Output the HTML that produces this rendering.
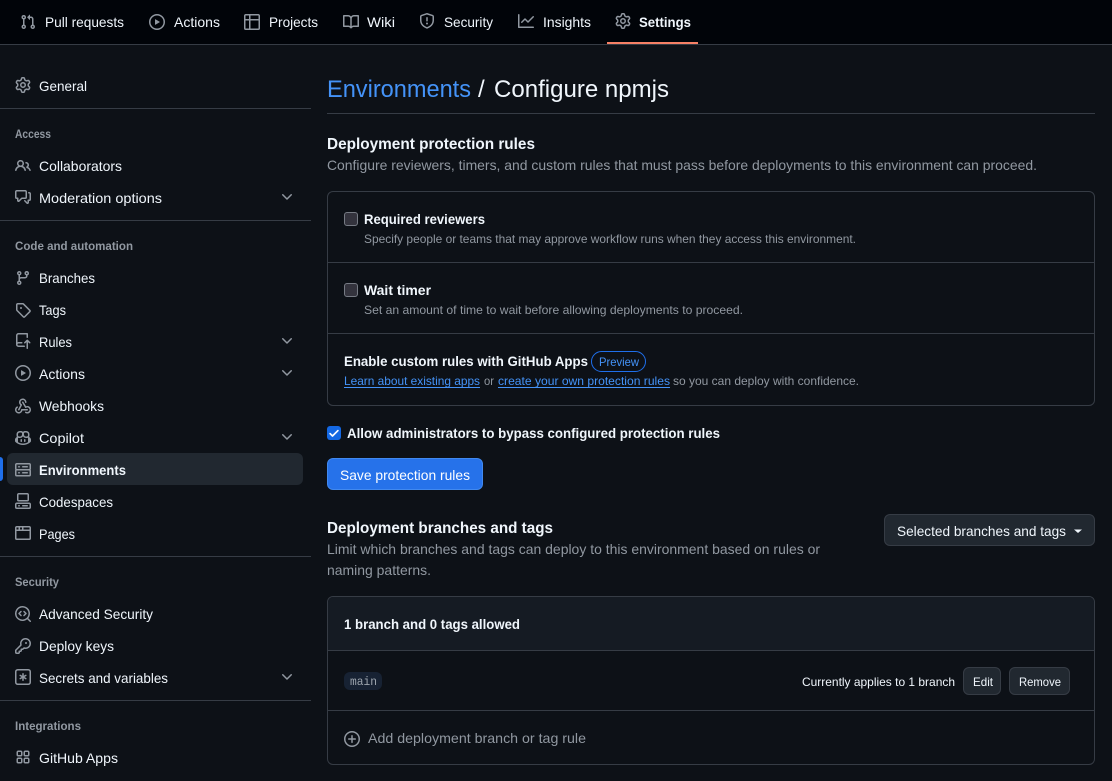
<!DOCTYPE html>
<html lang="en"><head><meta charset="utf-8"><title>Configure npmjs</title>
<style>
html,body{margin:0;padding:0;background:#0d1117;width:1112px;height:781px;overflow:hidden}
.b{position:absolute;box-sizing:border-box}
svg{position:absolute;left:0;top:0}
text{font-family:"Liberation Sans",sans-serif;font-size:14px;fill:#f0f6fc}
text.s{font-weight:700}
text.m{fill:#9198a1}
text.x{font-size:12px}
text.l{fill:#4493f8}
text.h{font-size:12px;fill:#9198a1;font-weight:700}
path,.i{fill:#9198a1}
</style></head><body>
<div class="b" style="left:0;top:0;width:1112px;height:45px;background:#010409;border-bottom:1px solid #363c45"></div>
<div class="b" style="left:607px;top:42px;width:91px;height:2px;background:#f78166"></div>
<div class="b" style="left:0;top:108px;width:311px;height:1px;background:#363c45"></div>
<div class="b" style="left:0;top:220px;width:311px;height:1px;background:#363c45"></div>
<div class="b" style="left:0;top:556px;width:311px;height:1px;background:#363c45"></div>
<div class="b" style="left:0;top:700px;width:311px;height:1px;background:#363c45"></div>
<div class="b" style="left:7px;top:453px;width:296px;height:32px;background:#212830;border-radius:6px"></div>
<div class="b" style="left:0;top:457px;width:3px;height:24px;background:#1f6feb;border-radius:0 3px 3px 0"></div>
<div class="b" style="left:327px;top:113px;width:768px;height:1px;background:#363c45"></div>
<div class="b" style="left:327px;top:191px;width:768px;height:215px;border:1px solid #363c45;border-radius:6px"></div>
<div class="b" style="left:328px;top:262px;width:766px;height:1px;background:#363c45"></div>
<div class="b" style="left:328px;top:333px;width:766px;height:1px;background:#363c45"></div>
<div class="b" style="left:344px;top:212px;width:14px;height:14px;background:#33333d;border:1px solid #767b84;border-radius:3px"></div>
<div class="b" style="left:344px;top:283px;width:14px;height:14px;background:#33333d;border:1px solid #767b84;border-radius:3px"></div>
<div class="b" style="left:591px;top:351px;width:55px;height:21px;border:1px solid #1f6feb;border-radius:11px"></div>
<div class="b" style="left:344px;top:387px;width:136px;height:1px;background:#4493f8"></div>
<div class="b" style="left:498px;top:387px;width:172px;height:1px;background:#4493f8"></div>
<div class="b" style="left:327px;top:426px;width:14px;height:14px;background:#1468e3;border-radius:3px"></div>
<div class="b" style="left:327px;top:458px;width:156px;height:32px;background:#2672ea;border:1px solid #4189f0;border-radius:6px"></div>
<div class="b" style="left:884px;top:514px;width:211px;height:32px;background:#212830;border:1px solid #363c45;border-radius:6px"></div>
<div class="b" style="left:327px;top:596px;width:768px;height:169px;border:1px solid #363c45;border-radius:6px"></div>
<div class="b" style="left:328px;top:597px;width:766px;height:54px;background:#151b23;border-bottom:1px solid #363c45;border-radius:5px 5px 0 0"></div>
<div class="b" style="left:328px;top:710px;width:766px;height:1px;background:#363c45"></div>
<div class="b" style="left:344px;top:672px;width:38px;height:18px;background:#172233;border-radius:6px"></div>
<div class="b" style="left:963px;top:667px;width:38px;height:28px;background:#212830;border:1px solid #363c45;border-radius:6px"></div>
<div class="b" style="left:1009px;top:667px;width:61px;height:28px;background:#212830;border:1px solid #363c45;border-radius:6px"></div>

<svg width="1112" height="781" viewBox="0 0 1112 781" xmlns="http://www.w3.org/2000/svg">
<defs>
<symbol id="play" viewBox="0 0 16 16"><path d="M8 0a8 8 0 1 1 0 16A8 8 0 0 1 8 0ZM1.5 8a6.5 6.5 0 1 0 13 0 6.5 6.5 0 0 0-13 0Zm4.879-2.773 4.264 2.559a.25.25 0 0 1 0 .428l-4.264 2.559A.25.25 0 0 1 6 10.559V5.442a.25.25 0 0 1 .379-.215Z"/></symbol>
<symbol id="gear" viewBox="0 0 16 16"><path d="M8 0a8.2 8.2 0 0 1 .701.031C9.444.095 9.99.645 10.16 1.29l.288 1.107c.018.066.079.158.212.224.231.114.454.243.668.386.123.082.233.09.299.071l1.103-.303c.644-.176 1.392.021 1.82.63.27.385.506.792.704 1.218.315.675.111 1.422-.364 1.891l-.814.806c-.049.048-.098.147-.088.294.016.257.016.515 0 .772-.01.147.038.246.088.294l.814.806c.475.469.679 1.216.364 1.891a7.977 7.977 0 0 1-.704 1.217c-.428.61-1.176.807-1.82.63l-1.102-.302c-.067-.019-.177-.011-.3.071a5.909 5.909 0 0 1-.668.386c-.133.066-.194.158-.211.224l-.29 1.106c-.168.646-.715 1.196-1.458 1.26a8.006 8.006 0 0 1-1.402 0c-.743-.064-1.289-.614-1.458-1.26l-.289-1.106c-.018-.066-.079-.158-.212-.224a5.738 5.738 0 0 1-.668-.386c-.123-.082-.233-.09-.299-.071l-1.103.303c-.644.176-1.392-.021-1.82-.63a8.12 8.12 0 0 1-.704-1.218c-.315-.675-.111-1.422.363-1.891l.815-.806c.05-.048.098-.147.088-.294a6.214 6.214 0 0 1 0-.772c.01-.147-.038-.246-.088-.294l-.815-.806C.635 6.045.431 5.298.746 4.623a7.92 7.92 0 0 1 .704-1.217c.428-.61 1.176-.807 1.82-.63l1.102.302c.067.019.177.011.3-.071.214-.143.437-.272.668-.386.133-.066.194-.158.211-.224l.29-1.106C6.009.645 6.556.095 7.299.03 7.53.01 7.764 0 8 0Zm-.571 1.525c-.036.003-.108.036-.137.146l-.289 1.105c-.147.561-.549.967-.998 1.189-.173.086-.34.183-.5.29-.417.278-.97.423-1.529.27l-1.103-.303c-.109-.03-.175.016-.195.045-.22.312-.412.644-.573.99-.014.031-.021.11.059.19l.815.806c.411.406.562.957.53 1.456a4.709 4.709 0 0 0 0 .582c.032.499-.119 1.05-.53 1.456l-.815.806c-.081.08-.073.159-.059.19.162.346.353.677.573.989.02.03.085.076.195.046l1.102-.303c.56-.153 1.113-.008 1.53.27.161.107.328.204.501.29.447.222.85.629.997 1.189l.289 1.105c.029.109.101.143.137.146a6.6 6.6 0 0 0 1.142 0c.036-.003.108-.036.137-.146l.289-1.105c.147-.561.549-.967.998-1.189.173-.086.34-.183.5-.29.417-.278.97-.423 1.529-.27l1.103.303c.109.029.175-.016.195-.045.22-.313.411-.644.573-.99.014-.031.021-.11-.059-.19l-.815-.806c-.411-.406-.562-.957-.53-1.456a4.709 4.709 0 0 0 0-.582c-.032-.499.119-1.05.53-1.456l.815-.806c.081-.08.073-.159.059-.19a6.464 6.464 0 0 0-.573-.989c-.02-.03-.085-.076-.195-.046l-1.102.303c-.56.153-1.113.008-1.53-.27a4.44 4.44 0 0 0-.501-.29c-.447-.222-.85-.629-.997-1.189l-.289-1.105c-.029-.11-.101-.143-.137-.146a6.6 6.6 0 0 0-1.142 0ZM11 8a3 3 0 1 1-6 0 3 3 0 0 1 6 0ZM9.5 8a1.5 1.5 0 1 0-3.001.001A1.5 1.5 0 0 0 9.5 8Z"/></symbol>
<symbol id="chev" viewBox="0 0 16 16"><path d="M12.78 5.22a.749.749 0 0 1 0 1.06l-4.25 4.25a.749.749 0 0 1-1.06 0L3.22 6.28a.749.749 0 1 1 1.06-1.06L8 8.939l3.72-3.719a.749.749 0 0 1 1.06 0Z"/></symbol>
</defs>

<!-- top nav icons -->
<g transform="translate(20,14)"><path d="M1.5 3.25a2.25 2.25 0 1 1 3 2.122v5.256a2.251 2.251 0 1 1-1.5 0V5.372A2.25 2.25 0 0 1 1.5 3.25Zm5.677-.177L9.573.677A.25.25 0 0 1 10 .854V2.5h1A2.5 2.5 0 0 1 13.5 5v5.628a2.251 2.251 0 1 1-1.5 0V5a1 1 0 0 0-1-1h-1v1.646a.25.25 0 0 1-.427.177L7.177 3.427a.25.25 0 0 1 0-.354ZM3.75 2.5a.75.75 0 1 0 0 1.5.75.75 0 0 0 0-1.5Zm0 9.5a.75.75 0 1 0 0 1.5.75.75 0 0 0 0-1.5Zm8.25.75a.75.75 0 1 0 1.5 0 .75.75 0 0 0-1.5 0Z"/></g>
<use href="#play" x="149" y="14" width="16" height="16"/>
<g transform="translate(244,14)"><path d="M0 1.75C0 .784.784 0 1.75 0h12.5C15.216 0 16 .784 16 1.75v12.5A1.75 1.75 0 0 1 14.25 16H1.75A1.75 1.75 0 0 1 0 14.25ZM6.5 6.5v8h7.75a.25.25 0 0 0 .25-.25V6.5Zm8-1.5V1.75a.25.25 0 0 0-.25-.25H6.5V5Zm-13 1.5v7.75c0 .138.112.25.25.25H5v-8ZM5 5V1.5H1.75a.25.25 0 0 0-.25.25V5Z"/></g>
<g transform="translate(343,14)"><path d="M0 1.75A.75.75 0 0 1 .75 1h4.253c1.227 0 2.317.59 3 1.501A3.743 3.743 0 0 1 11.006 1h4.245a.75.75 0 0 1 .75.75v10.5a.75.75 0 0 1-.75.75h-4.507a2.25 2.25 0 0 0-1.591.659l-.622.621a.75.75 0 0 1-1.06 0l-.622-.621A2.25 2.25 0 0 0 5.258 13H.75a.75.75 0 0 1-.75-.75Zm7.251 10.324.004-5.073-.002-2.253A2.25 2.25 0 0 0 5.003 2.5H1.5v9h3.757a3.75 3.75 0 0 1 1.994.574ZM8.755 4.75l-.004 7.322a3.752 3.752 0 0 1 1.992-.572H14.5v-9h-3.495a2.25 2.25 0 0 0-2.25 2.25Z"/></g>
<g transform="translate(419,13)"><path d="M7.467.133a1.748 1.748 0 0 1 1.066 0l5.25 1.68A1.75 1.75 0 0 1 15 3.48V7c0 1.566-.32 3.182-1.303 4.682-.983 1.498-2.585 2.813-5.032 3.855a1.697 1.697 0 0 1-1.33 0c-2.447-1.042-4.049-2.357-5.032-3.855C1.32 10.182 1 8.566 1 7V3.48a1.75 1.75 0 0 1 1.217-1.667Zm.61 1.429a.25.25 0 0 0-.153 0l-5.25 1.68a.25.25 0 0 0-.174.238V7c0 1.358.275 2.666 1.057 3.86.784 1.194 2.121 2.34 4.366 3.297a.196.196 0 0 0 .154 0c2.245-.956 3.582-2.104 4.366-3.298C13.225 9.666 13.5 8.36 13.5 7V3.48a.251.251 0 0 0-.174-.237l-5.25-1.68ZM8.75 4.75v3a.75.75 0 0 1-1.5 0v-3a.75.75 0 0 1 1.5 0ZM9 10.5a1 1 0 1 1-2 0 1 1 0 0 1 2 0Z"/></g>
<g transform="translate(518,13)"><path d="M1.5 1.75V13.5h13.75a.75.75 0 0 1 0 1.5H.75a.75.75 0 0 1-.75-.75V1.75a.75.75 0 0 1 1.5 0Zm14.28 2.53-5.25 5.25a.75.75 0 0 1-1.06 0L7 7.06 4.28 9.78a.751.751 0 0 1-1.042-.018.751.751 0 0 1-.018-1.042l3.25-3.25a.75.75 0 0 1 1.06 0L10 7.94l4.72-4.72a.751.751 0 0 1 1.042.018.751.751 0 0 1 .018 1.042Z"/></g>
<use href="#gear" x="615" y="13" width="16" height="16"/>

<!-- top nav text -->
<text x="45" y="27" textLength="79" lengthAdjust="spacingAndGlyphs">Pull requests</text>
<text x="174" y="27" textLength="46" lengthAdjust="spacingAndGlyphs">Actions</text>
<text x="269" y="27" textLength="49" lengthAdjust="spacingAndGlyphs">Projects</text>
<text x="367" y="27" textLength="28" lengthAdjust="spacingAndGlyphs">Wiki</text>
<text x="444" y="27" textLength="49" lengthAdjust="spacingAndGlyphs">Security</text>
<text x="543" y="27" textLength="48" lengthAdjust="spacingAndGlyphs">Insights</text>
<text class="s" x="639" y="27" textLength="52" lengthAdjust="spacingAndGlyphs">Settings</text>

<!-- sidebar icons -->
<use href="#gear" x="15" y="77" width="16" height="16"/>
<g transform="translate(15,158)"><path d="M2 5.5a3.5 3.5 0 1 1 5.898 2.549 5.508 5.508 0 0 1 3.034 4.084.75.75 0 1 1-1.482.235 4 4 0 0 0-7.9 0 .75.75 0 0 1-1.482-.236A5.507 5.507 0 0 1 3.102 8.05 3.493 3.493 0 0 1 2 5.5ZM11 4a3.001 3.001 0 0 1 2.22 5.018 5.01 5.01 0 0 1 2.56 3.012.749.749 0 0 1-.885.954.752.752 0 0 1-.549-.514 3.507 3.507 0 0 0-2.522-2.372.75.75 0 0 1-.574-.73v-.352a.75.75 0 0 1 .416-.672A1.5 1.5 0 0 0 11 5.5.75.75 0 0 1 11 4Zm-5.5-.5a2 2 0 1 0-.001 3.999A2 2 0 0 0 5.5 3.5Z"/></g>
<g transform="translate(15,189)"><path d="M1.75 1h8.5c.966 0 1.75.784 1.75 1.75v5.5A1.75 1.75 0 0 1 10.25 10H7.061l-2.574 2.573A1.458 1.458 0 0 1 2 11.543V10h-.25A1.75 1.75 0 0 1 0 8.25v-5.5C0 1.784.784 1 1.75 1ZM1.5 2.75v5.5c0 .138.112.25.25.25h1a.75.75 0 0 1 .75.75v2.19l2.72-2.72a.749.749 0 0 1 .53-.22h3.5a.25.25 0 0 0 .25-.25v-5.5a.25.25 0 0 0-.25-.25h-8.5a.25.25 0 0 0-.25.25Zm13 2a.25.25 0 0 0-.25-.25h-.5a.75.75 0 0 1 0-1.5h.5c.966 0 1.75.784 1.75 1.75v5.5A1.75 1.75 0 0 1 14.25 12H14v1.543a1.458 1.458 0 0 1-2.487 1.03L9.22 12.28a.749.749 0 0 1 .326-1.275.749.749 0 0 1 .734.215l2.22 2.22v-2.19a.75.75 0 0 1 .75-.75h1a.25.25 0 0 0 .25-.25Z"/></g>
<g transform="translate(15,270)"><path d="M9.5 3.25a2.25 2.25 0 1 1 3 2.122V6A2.5 2.5 0 0 1 10 8.5H6a1 1 0 0 0-1 1v1.128a2.251 2.251 0 1 1-1.5 0V5.372a2.25 2.25 0 1 1 1.5 0v1.836A2.493 2.493 0 0 1 6 7h4a1 1 0 0 0 1-1v-.628A2.25 2.25 0 0 1 9.5 3.25Zm-6 0a.75.75 0 1 0 1.5 0 .75.75 0 0 0-1.5 0Zm8.25-.75a.75.75 0 1 0 0 1.5.75.75 0 0 0 0-1.5ZM4.25 12a.75.75 0 1 0 0 1.5.75.75 0 0 0 0-1.5Z"/></g>
<g transform="translate(15,302)"><path d="M1 7.775V2.75C1 1.784 1.784 1 2.75 1h5.025c.464 0 .91.184 1.238.513l6.25 6.25a1.75 1.75 0 0 1 0 2.474l-5.026 5.026a1.75 1.75 0 0 1-2.474 0l-6.25-6.25A1.752 1.752 0 0 1 1 7.775Zm1.5 0c0 .066.026.13.073.177l6.25 6.25a.25.25 0 0 0 .354 0l5.025-5.025a.25.25 0 0 0 0-.354l-6.25-6.25a.25.25 0 0 0-.177-.073H2.75a.25.25 0 0 0-.25.25ZM6 5a1 1 0 1 1 0 2 1 1 0 0 1 0-2Z"/></g>
<g transform="translate(15,333)"><path d="M1 2.5A2.5 2.5 0 0 1 3.5 0h8.75a.75.75 0 0 1 .75.75v3.5a.75.75 0 0 1-1.5 0V1.5h-8a1 1 0 0 0-1 1v6.708A2.493 2.493 0 0 1 3.5 9h3.25a.75.75 0 0 1 0 1.5H3.5a1 1 0 0 0 0 2h5.75a.75.75 0 0 1 0 1.5H3.5A2.5 2.5 0 0 1 1 11.5Zm13.23 7.79h-.001l-1.224-1.224v6.184a.75.75 0 0 1-1.5 0V9.066L10.28 10.29a.75.75 0 0 1-1.06-1.061l2.505-2.504a.75.75 0 0 1 1.06 0L15.29 9.23a.751.751 0 0 1-.018 1.042.751.751 0 0 1-1.042.018Z"/></g>
<use href="#play" x="15" y="365" width="16" height="16"/>
<g transform="translate(15,398)"><path d="M5.5 4.25a2.25 2.25 0 0 1 4.5 0 .75.75 0 0 0 1.5 0 3.75 3.75 0 1 0-6.14 2.889l-2.272 4.258a.75.75 0 0 0 1.324.706L7 7.25a.75.75 0 0 0-.309-1.015A2.25 2.25 0 0 1 5.5 4.25Z"/><path d="M7.364 3.607a.75.75 0 0 1 1.03.257l2.608 4.349a3.75 3.75 0 1 1-.628 6.785.75.75 0 0 1 .752-1.299 2.25 2.25 0 1 0-.033-3.88.75.75 0 0 1-1.03-.256L7.107 4.636a.75.75 0 0 1 .257-1.03Z"/><path d="M2.9 8.776A.75.75 0 0 1 2.625 9.8 2.25 2.25 0 1 0 6 11.75a.75.75 0 0 1 .75-.751h5.5a.75.75 0 0 1 0 1.5H7.425a3.751 3.751 0 1 1-5.55-3.998.75.75 0 0 1 1.024.274Z"/></g>
<g transform="translate(15,430)"><path d="M7.998 15.035c-4.562 0-7.873-2.914-7.998-3.749V9.338c.085-.628.677-1.686 1.588-2.065.013-.07.024-.143.036-.218.029-.183.06-.384.126-.612-.201-.508-.254-1.084-.254-1.656 0-.87.128-1.769.693-2.484.579-.733 1.494-1.124 2.724-1.261 1.206-.134 2.262.034 2.944.765.05.053.096.108.139.165.044-.057.094-.112.143-.165.682-.731 1.738-.899 2.944-.765 1.23.137 2.145.528 2.724 1.261.566.715.693 1.614.693 2.484 0 .572-.053 1.148-.254 1.656.066.228.098.429.126.612.012.076.024.148.037.218.924.385 1.522 1.471 1.591 2.095v1.872c0 .766-3.351 3.795-8.002 3.795Zm0-1.485c2.28 0 4.584-1.11 5.002-1.433V7.862l-.023-.116c-.49.21-1.075.291-1.727.291-1.146 0-2.059-.327-2.71-.991A3.222 3.222 0 0 1 8 6.303a3.24 3.24 0 0 1-.544.743c-.65.664-1.563.991-2.71.991-.652 0-1.236-.081-1.727-.291l-.023.116v4.255c.419.323 2.722 1.433 5.002 1.433ZM6.762 2.83c-.193-.206-.637-.413-1.682-.297-1.019.113-1.479.404-1.713.7-.247.312-.369.789-.369 1.554 0 .793.129 1.171.308 1.371.162.181.519.379 1.442.379.853 0 1.339-.235 1.638-.54.315-.322.527-.827.617-1.553.117-.935-.037-1.395-.241-1.614Zm4.155-.297c-1.044-.116-1.488.091-1.681.297-.204.219-.359.679-.242 1.614.091.726.303 1.231.618 1.553.299.305.784.54 1.638.54.922 0 1.28-.198 1.442-.379.179-.2.308-.578.308-1.371 0-.765-.123-1.242-.37-1.554-.233-.296-.693-.587-1.713-.7Z"/><path d="M6.25 9.037a.75.75 0 0 1 .75.75v1.501a.75.75 0 0 1-1.5 0V9.787a.75.75 0 0 1 .75-.75Zm4.25.75v1.501a.75.75 0 0 1-1.5 0V9.787a.75.75 0 0 1 1.5 0Z"/></g>
<g transform="translate(15,462)"><path d="M1.75 1h12.5c.966 0 1.75.784 1.75 1.75v4c0 .372-.116.717-.314 1 .198.283.314.628.314 1v4a1.75 1.75 0 0 1-1.75 1.75H1.75A1.75 1.75 0 0 1 0 12.75v-4c0-.358.109-.707.314-1a1.739 1.739 0 0 1-.314-1v-4C0 1.784.784 1 1.75 1ZM1.5 2.75v4c0 .138.112.25.25.25h12.5a.25.25 0 0 0 .25-.25v-4a.25.25 0 0 0-.25-.25H1.75a.25.25 0 0 0-.25.25Zm.25 5.75a.25.25 0 0 0-.25.25v4c0 .138.112.25.25.25h12.5a.25.25 0 0 0 .25-.25v-4a.25.25 0 0 0-.25-.25ZM7 4.75A.75.75 0 0 1 7.75 4h4.5a.75.75 0 0 1 0 1.5h-4.5A.75.75 0 0 1 7 4.75ZM7.75 10h4.5a.75.75 0 0 1 0 1.5h-4.5a.75.75 0 0 1 0-1.5ZM3 4.75A.75.75 0 0 1 3.75 4h.5a.75.75 0 0 1 0 1.5h-.5A.75.75 0 0 1 3 4.75ZM3.75 10h.5a.75.75 0 0 1 0 1.5h-.5a.75.75 0 0 1 0-1.5Z"/></g>
<g transform="translate(15,493)"><path d="M0 11.25c0-.966.784-1.75 1.75-1.75h12.5c.966 0 1.75.784 1.75 1.75v3A1.75 1.75 0 0 1 14.25 16H1.75A1.75 1.75 0 0 1 0 14.25Zm2-9.5C2 .784 2.784 0 3.75 0h8.5C13.216 0 14 .784 14 1.75v5a1.75 1.75 0 0 1-1.75 1.75h-8.5A1.75 1.75 0 0 1 2 6.75Zm1.75-.25a.25.25 0 0 0-.25.25v5c0 .138.112.25.25.25h8.5a.25.25 0 0 0 .25-.25v-5a.25.25 0 0 0-.25-.25Zm-2 9.5a.25.25 0 0 0-.25.25v3c0 .138.112.25.25.25h12.5a.25.25 0 0 0 .25-.25v-3a.25.25 0 0 0-.25-.25Z"/><path d="M7 12.75a.75.75 0 0 1 .75-.75h4.5a.75.75 0 0 1 0 1.5h-4.5a.75.75 0 0 1-.75-.75Zm-4 0a.75.75 0 0 1 .75-.75h.5a.75.75 0 0 1 0 1.5h-.5a.75.75 0 0 1-.75-.75Z"/></g>
<g transform="translate(15,525)"><path d="M0 2.75C0 1.784.784 1 1.75 1h12.5c.966 0 1.75.784 1.75 1.75v10.5A1.75 1.75 0 0 1 14.25 15H1.75A1.75 1.75 0 0 1 0 13.25ZM14.5 6h-13v7.25c0 .138.112.25.25.25h12.5a.25.25 0 0 0 .25-.25Zm-6-3.5v2H14.5V2.75a.25.25 0 0 0-.25-.25ZM5 2.5v2h2v-2Zm-3.25 0a.25.25 0 0 0-.25.25V4.5h2v-2Z"/></g>
<g transform="translate(15,606)"><path d="M8.47 4.97a.75.75 0 0 0 0 1.06L9.94 7.5 8.47 8.97a.75.75 0 1 0 1.06 1.06l2-2a.75.75 0 0 0 0-1.06l-2-2a.75.75 0 0 0-1.06 0ZM6.53 6.03a.75.75 0 0 0-1.06-1.06l-2 2a.75.75 0 0 0 0 1.06l2 2a.75.75 0 1 0 1.06-1.06L5.06 7.5l1.47-1.47Z"/><path d="M12.246 13.307a7.501 7.501 0 1 1 1.06-1.06l2.474 2.473a.749.749 0 0 1-.326 1.275.749.749 0 0 1-.734-.215ZM1.5 7.5a6.002 6.002 0 0 0 3.608 5.504 6.002 6.002 0 0 0 6.486-1.117.748.748 0 0 1 .292-.293A6 6 0 1 0 1.5 7.5Z"/></g>
<g transform="translate(15,638)"><path d="M10.5 0a5.499 5.499 0 1 1-1.288 10.848l-.932.932a.749.749 0 0 1-.53.22H7v.75a.749.749 0 0 1-.22.53l-.5.5a.749.749 0 0 1-.53.22H5v.75a.749.749 0 0 1-.22.53l-.5.5a.749.749 0 0 1-.53.22h-2A1.75 1.75 0 0 1 0 14.25v-2c0-.199.079-.389.22-.53l4.932-4.932A5.5 5.5 0 0 1 10.5 0Zm-4 5.5c-.001.431.069.86.205 1.269a.75.75 0 0 1-.181.768L1.5 12.56v1.69c0 .138.112.25.25.25h1.69l.06-.06v-1.19a.75.75 0 0 1 .75-.75h1.19l.06-.06v-1.19a.75.75 0 0 1 .75-.75h1.19l1.023-1.025a.75.75 0 0 1 .768-.18A4 4 0 1 0 6.5 5.5ZM11 6a1 1 0 1 1 0-2 1 1 0 0 1 0 2Z"/></g>
<g transform="translate(15,669)"><path d="M0 2.75A2.75 2.75 0 0 1 2.75 0h10.5A2.75 2.75 0 0 1 16 2.75v10.5A2.75 2.75 0 0 1 13.25 16H2.75A2.75 2.75 0 0 1 0 13.25ZM2.75 1.5c-.69 0-1.25.56-1.25 1.25v10.5c0 .69.56 1.25 1.25 1.25h10.5c.69 0 1.25-.56 1.25-1.25V2.75c0-.69-.56-1.25-1.25-1.25Z"/><path d="M8 4a.75.75 0 0 1 .75.75V6.7l1.69-.975a.75.75 0 0 1 .75 1.3L9.5 8l1.69.976a.75.75 0 0 1-.75 1.298L8.75 9.3v1.951a.75.75 0 0 1-1.5 0V9.299l-1.69.975a.751.751 0 0 1-.75-1.298L6.5 8l-1.69-.975a.75.75 0 0 1 .75-1.3l1.69.976V4.75A.75.75 0 0 1 8 4Z"/></g>
<g transform="translate(15,749)"><path d="M1.5 3.25c0-.966.784-1.75 1.75-1.75h2.5c.966 0 1.75.784 1.75 1.75v2.5A1.75 1.75 0 0 1 5.75 7.5h-2.5A1.75 1.75 0 0 1 1.5 5.75Zm7 0c0-.966.784-1.75 1.75-1.75h2.5c.966 0 1.75.784 1.75 1.75v2.5a1.75 1.75 0 0 1-1.75 1.75h-2.5A1.75 1.75 0 0 1 8.5 5.75Zm-7 7c0-.966.784-1.75 1.75-1.75h2.5c.966 0 1.75.784 1.75 1.75v2.5a1.75 1.75 0 0 1-1.75 1.75h-2.5a1.75 1.75 0 0 1-1.75-1.75Zm7 0c0-.966.784-1.75 1.75-1.75h2.5c.966 0 1.75.784 1.75 1.75v2.5a1.75 1.75 0 0 1-1.75 1.75h-2.5a1.75 1.75 0 0 1-1.75-1.75ZM3.25 3a.25.25 0 0 0-.25.25v2.5c0 .138.112.25.25.25h2.5A.25.25 0 0 0 6 5.75v-2.5A.25.25 0 0 0 5.75 3Zm7 0a.25.25 0 0 0-.25.25v2.5c0 .138.112.25.25.25h2.5a.25.25 0 0 0 .25-.25v-2.5a.25.25 0 0 0-.25-.25Zm-7 7a.25.25 0 0 0-.25.25v2.5c0 .138.112.25.25.25h2.5a.25.25 0 0 0 .25-.25v-2.5a.25.25 0 0 0-.25-.25Zm7 0a.25.25 0 0 0-.25.25v2.5c0 .138.112.25.25.25h2.5a.25.25 0 0 0 .25-.25v-2.5a.25.25 0 0 0-.25-.25Z"/></g>

<!-- chevrons -->
<use href="#chev" x="279" y="189" width="16" height="16"/>
<use href="#chev" x="279" y="333" width="16" height="16"/>
<use href="#chev" x="279" y="365" width="16" height="16"/>
<use href="#chev" x="279" y="429" width="16" height="16"/>
<use href="#chev" x="279" y="669" width="16" height="16"/>

<!-- sidebar text -->
<text x="39" y="91" textLength="48" lengthAdjust="spacingAndGlyphs">General</text>
<text class="h" x="15" y="138" textLength="36" lengthAdjust="spacingAndGlyphs">Access</text>
<text x="39" y="171" textLength="83" lengthAdjust="spacingAndGlyphs">Collaborators</text>
<text x="39" y="203" textLength="123" lengthAdjust="spacingAndGlyphs">Moderation options</text>
<text class="h" x="15" y="250" textLength="118" lengthAdjust="spacingAndGlyphs">Code and automation</text>
<text x="39" y="283" textLength="56" lengthAdjust="spacingAndGlyphs">Branches</text>
<text x="39" y="315" textLength="27" lengthAdjust="spacingAndGlyphs">Tags</text>
<text x="39" y="347" textLength="33" lengthAdjust="spacingAndGlyphs">Rules</text>
<text x="39" y="379" textLength="46" lengthAdjust="spacingAndGlyphs">Actions</text>
<text x="39" y="411" textLength="65" lengthAdjust="spacingAndGlyphs">Webhooks</text>
<text x="39" y="443" textLength="45" lengthAdjust="spacingAndGlyphs">Copilot</text>
<text class="s" x="39" y="475" textLength="87" lengthAdjust="spacingAndGlyphs">Environments</text>
<text x="39" y="507" textLength="74" lengthAdjust="spacingAndGlyphs">Codespaces</text>
<text x="39" y="539" textLength="36" lengthAdjust="spacingAndGlyphs">Pages</text>
<text class="h" x="15" y="586" textLength="44" lengthAdjust="spacingAndGlyphs">Security</text>
<text x="39" y="619" textLength="114" lengthAdjust="spacingAndGlyphs">Advanced Security</text>
<text x="39" y="651" textLength="75" lengthAdjust="spacingAndGlyphs">Deploy keys</text>
<text x="39" y="683" textLength="129" lengthAdjust="spacingAndGlyphs">Secrets and variables</text>
<text class="h" x="15" y="730" textLength="66" lengthAdjust="spacingAndGlyphs">Integrations</text>
<text x="39" y="763" textLength="79" lengthAdjust="spacingAndGlyphs">GitHub Apps</text>

<!-- main text -->
<text class="l" x="327" y="97" style="font-size:24px" textLength="144" lengthAdjust="spacingAndGlyphs">Environments</text>
<text x="478" y="97" style="font-size:24px">/</text>
<text x="494" y="97" style="font-size:24px" textLength="175" lengthAdjust="spacingAndGlyphs">Configure npmjs</text>
<text class="s" x="327" y="149" style="font-size:16px" textLength="208" lengthAdjust="spacingAndGlyphs">Deployment protection rules</text>
<text class="m" x="327" y="170" textLength="710" lengthAdjust="spacingAndGlyphs">Configure reviewers, timers, and custom rules that must pass before deployments to this environment can proceed.</text>

<text class="s" x="364" y="224" textLength="121" lengthAdjust="spacingAndGlyphs">Required reviewers</text>
<text class="m x" x="364" y="243" textLength="492" lengthAdjust="spacingAndGlyphs">Specify people or teams that may approve workflow runs when they access this environment.</text>
<text class="s" x="364" y="295" textLength="67" lengthAdjust="spacingAndGlyphs">Wait timer</text>
<text class="m x" x="364" y="314" textLength="379" lengthAdjust="spacingAndGlyphs">Set an amount of time to wait before allowing deployments to proceed.</text>
<text class="s" x="344" y="366" textLength="244" lengthAdjust="spacingAndGlyphs">Enable custom rules with GitHub Apps</text>
<text class="l x" x="599" y="366" textLength="40" lengthAdjust="spacingAndGlyphs">Preview</text>
<text class="l x" x="344" y="385" textLength="136" lengthAdjust="spacingAndGlyphs">Learn about existing apps</text>
<text class="m x" x="484" y="385" textLength="10" lengthAdjust="spacingAndGlyphs">or</text>
<text class="l x" x="498" y="385" textLength="172" lengthAdjust="spacingAndGlyphs">create your own protection rules</text>
<text class="m x" x="673" y="385" textLength="186" lengthAdjust="spacingAndGlyphs">so you can deploy with confidence.</text>

<path style="fill:#fff;stroke:#fff;stroke-width:.7" transform="translate(328,427) scale(.75)" d="M13.78 4.22a.75.75 0 0 1 0 1.06l-7.25 7.25a.75.75 0 0 1-1.06 0L2.22 9.28a.751.751 0 0 1 .018-1.042.751.751 0 0 1 1.042-.018L6 10.94l6.72-6.72a.75.75 0 0 1 1.06 0Z"/>
<text class="s" x="347" y="438" textLength="373" lengthAdjust="spacingAndGlyphs">Allow administrators to bypass configured protection rules</text>
<text x="340" y="480" style="fill:#fff" textLength="130" lengthAdjust="spacingAndGlyphs">Save protection rules</text>

<text class="s" x="327" y="533" style="font-size:16px" textLength="226" lengthAdjust="spacingAndGlyphs">Deployment branches and tags</text>
<text class="m" x="327" y="554" textLength="493" lengthAdjust="spacingAndGlyphs">Limit which branches and tags can deploy to this environment based on rules or</text>
<text class="m" x="327" y="575" textLength="104" lengthAdjust="spacingAndGlyphs">naming patterns.</text>
<text x="897" y="536" textLength="169" lengthAdjust="spacingAndGlyphs">Selected branches and tags</text>
<path style="fill:#f0f6fc" d="M1074 529.5h8l-4 3.5z"/>

<text class="s" x="344" y="629" style="font-size:13.5px" textLength="176" lengthAdjust="spacingAndGlyphs">1 branch and 0 tags allowed</text>
<text x="350" y="685" style="font-family:'Liberation Mono',monospace;font-size:12px;fill:#9da5ae" textLength="27" lengthAdjust="spacingAndGlyphs">main</text>
<text class="x" x="802" y="686" textLength="153" lengthAdjust="spacingAndGlyphs">Currently applies to 1 branch</text>
<text class="x" x="973" y="686" textLength="20" lengthAdjust="spacingAndGlyphs">Edit</text>
<text class="x" x="1019" y="686" textLength="42" lengthAdjust="spacingAndGlyphs">Remove</text>
<g transform="translate(344,731)"><path d="M8 0a8 8 0 1 1 0 16A8 8 0 0 1 8 0ZM1.5 8a6.5 6.5 0 1 0 13 0 6.5 6.5 0 0 0-13 0Zm7.25-3.25v2.5h2.5a.75.75 0 0 1 0 1.5h-2.5v2.5a.75.75 0 0 1-1.5 0v-2.5h-2.5a.75.75 0 0 1 0-1.5h2.5v-2.5a.75.75 0 0 1 1.5 0Z"/></g>
<text class="m" x="368" y="743" textLength="218" lengthAdjust="spacingAndGlyphs">Add deployment branch or tag rule</text>
</svg>
</body></html>
